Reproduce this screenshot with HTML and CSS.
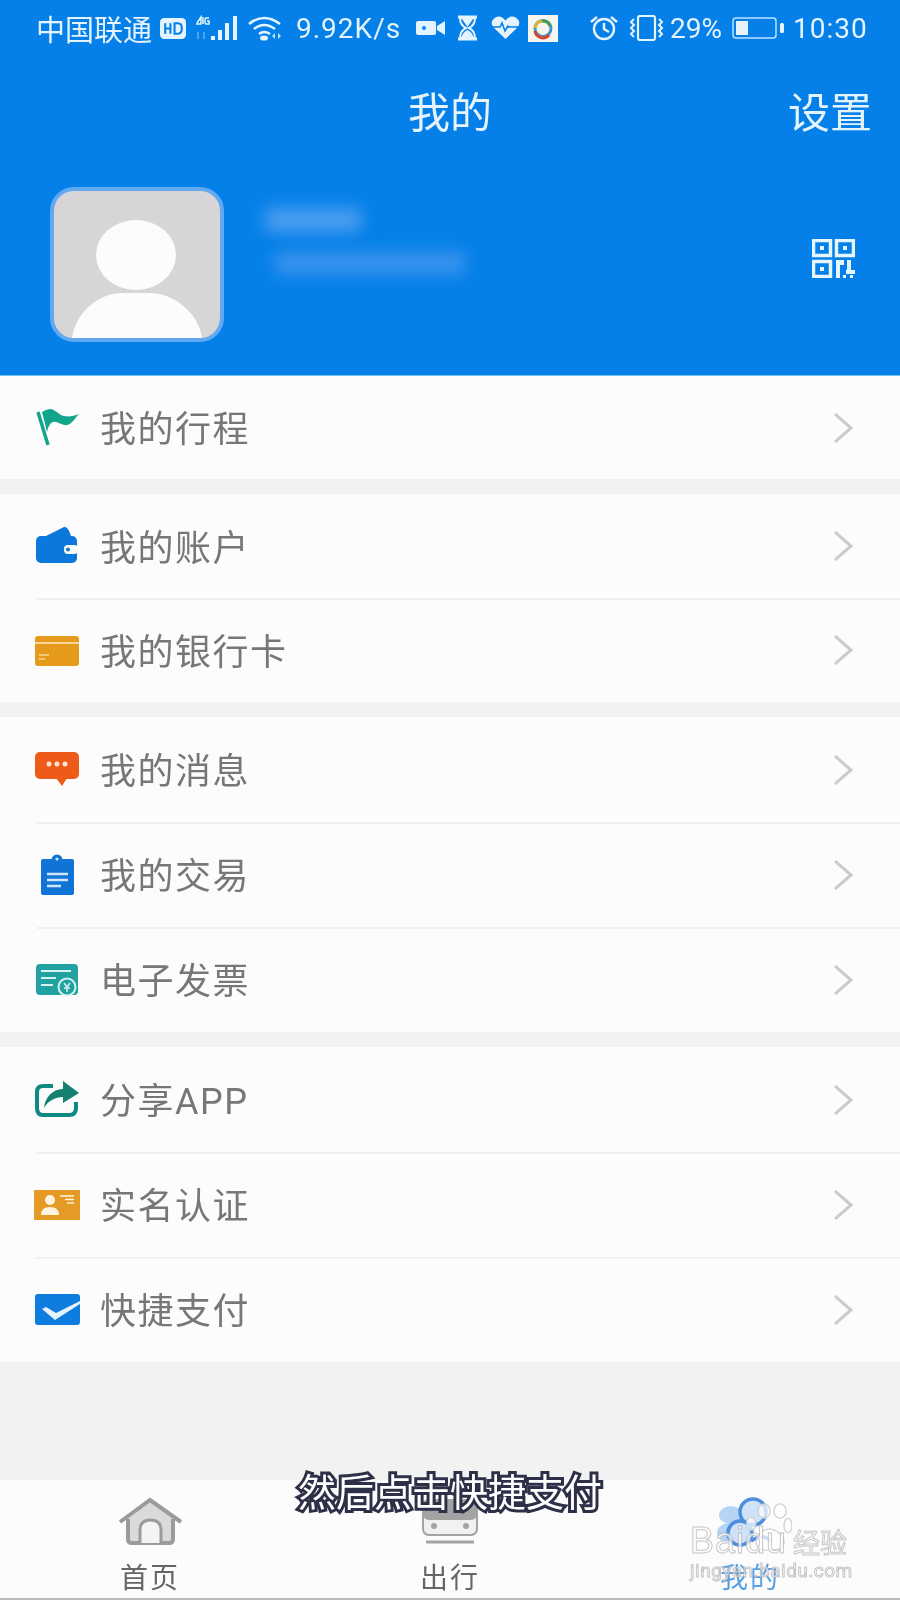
FILE: index.html
```html
<!DOCTYPE html>
<html lang="zh-CN">
<head>
<meta charset="UTF-8">
<title>我的</title>
<link rel="stylesheet" href="styles.css">
</head>
<body>

<div class="screen">

  <div class="header">
    <div class="status-bar">
      <span class="carrier">中国联通</span>
      <svg class="st-hd" width="26" height="21" viewBox="0 0 25 20"><rect width="25" height="20" rx="4" fill="#e4f3fd"/><path d="M5 5v10M5 10h5M10 5v10M14 5v10h3q4 0 4-5t-4-5z" fill="none" stroke="#0580e8" stroke-width="2"/></svg>
      <svg class="st-signal" width="44" height="26" viewBox="0 0 44 26"><path d="M1 8l4-6v7H0M7 2v7M13 3h-3q-1 0-1 3t1 3h3V6h-2" fill="none" stroke="#e4f3fd" stroke-width="1.5"/><path d="M2 17v7M8 17v7" stroke="#5fb0f2" stroke-width="1.5"/><rect x="15" y="21" width="4" height="4" fill="#e4f3fd"/><rect x="22" y="15" width="4" height="10" fill="#e4f3fd"/><rect x="29" y="8" width="4" height="17" fill="#e4f3fd"/><rect x="37" y="1" width="4" height="24" fill="#e4f3fd"/></svg>
      <svg class="st-wifi" width="34" height="26" viewBox="0 0 34 26"><path d="M1 9q15-12 31 0M6 14q10-8 21 0M11 19q5-4 11 0" fill="none" stroke="#e4f3fd" stroke-width="2.6"/><ellipse cx="16" cy="23" rx="4" ry="2.6" fill="#e4f3fd"/><path d="M24 21l3 3v-6zM33 21l-3 3v-6z" fill="#bfe0fa"/></svg>
      <span class="speed">9.92K/s</span>
      <svg class="st-cam" width="29" height="16" viewBox="0 0 29 16"><rect y="1" width="20" height="14" rx="2" fill="#e4f3fd"/><circle cx="8" cy="8" r="2" fill="#0580e8"/><path d="M21 6l8-5v14l-8-5z" fill="#e4f3fd"/></svg>
      <svg class="st-glass" width="21" height="26" viewBox="0 0 21 26"><path d="M1 2h19M1 24h19" stroke="#e4f3fd" stroke-width="3"/><path d="M3 3h15q0 7-6 10 6 3 6 10H3q0-7 6-10Q3 10 3 3z" fill="none" stroke="#e4f3fd" stroke-width="2"/><path d="M5 4h11l-5.500 8zM4 23q2-6 6.500-8 4.500 2 6.500 8z" fill="#e4f3fd"/></svg>
      <svg class="st-heart" width="29" height="24" viewBox="0 0 29 24"><path d="M14.500 23L2 11Q-1 6 3 2.500T12 2l2.500 2.500L17 2q5-3 9 .5t1 8.500z" fill="#e4f3fd"/><path d="M0 11h9l2-4 3 8 3-5 1 1h10" fill="none" stroke="#0580e8" stroke-width="1.600"/></svg>
      <svg class="st-app" width="30" height="27" viewBox="0 0 30 27"><rect width="30" height="27" fill="#f7f5ee"/><circle cx="15" cy="13.500" r="8" fill="none" stroke="#3a9ad0" stroke-width="3"/><path d="M7 13a8 8 0 0 1 7-7" fill="none" stroke="#e8b22c" stroke-width="3"/><path d="M7 16a8 8 0 0 0 14 4" fill="none" stroke="#d8452c" stroke-width="3"/><path d="M14 6a8 8 0 0 1 8 5" fill="none" stroke="#4a9f4a" stroke-width="3"/></svg>
      <svg class="st-alarm" width="28" height="26" viewBox="0 0 28 26"><circle cx="14" cy="14" r="10" fill="none" stroke="#e4f3fd" stroke-width="2.400"/><path d="M14 8v6l5 3M1 7l6-5M27 7l-6-5" fill="none" stroke="#e4f3fd" stroke-width="2.400"/></svg>
      <svg class="st-vibrate" width="37" height="26" viewBox="0 0 37 26"><rect x="10" y="1" width="17" height="24" rx="2" fill="none" stroke="#e4f3fd" stroke-width="2.200"/><path d="M6 4l-3 3 3 3-3 3 3 3-3 3 3 3M31 4l3 3-3 3 3 3-3 3 3 3-3 3" fill="none" stroke="#e4f3fd" stroke-width="2"/></svg>
      <span class="battery-pct">29%</span>
      <svg class="st-battery" width="53" height="22" viewBox="0 0 53 22"><rect x="1" y="1" width="43" height="20" rx="3" fill="none" stroke="#bfe0fa" stroke-width="1.500"/><rect x="4" y="4" width="12" height="14" fill="#e4f3fd"/><rect x="48" y="6" width="4" height="10" rx="1.500" fill="#e4f3fd"/></svg>
      <span class="clock">10:30</span>
    </div>

    <div class="title-bar">
      <span></span>
      <span class="page-title">我的</span>
      <span class="settings">设置</span>
    </div>

    <div class="profile">
      <div class="avatar">
        <svg width="166" height="147" viewBox="0 0 166 147"><ellipse cx="82" cy="64" rx="40" ry="35" fill="#fdfcfd"/><path d="M18 147C22 120 46 102 68 102H96C118 102 144 120 148 147Z" fill="#fdfcfd"/></svg>
      </div>
      <div class="user-info">
        <div class="user-name"></div>
        <div class="user-phone"></div>
      </div>
      <svg class="qr" width="43" height="39" viewBox="0 0 43 39"><g fill="none" stroke="#e6f6fd" stroke-width="3.500"><rect x="1.500" y="1.500" width="17" height="15"/><rect x="24.500" y="1.500" width="17" height="15"/><rect x="1.500" y="22.500" width="17" height="15"/></g><g fill="#e6f6fd"><rect x="8" y="7" width="4" height="4"/><rect x="31" y="7" width="4" height="4"/><rect x="8" y="28" width="4" height="4"/><path d="M24 21h8v5h-4v13h-4zM35 21h4v10h4v4h-9v-4h1z"/><rect x="31" y="36" width="3" height="3"/><rect x="38" y="36" width="3" height="3"/></g></svg>
    </div>
  </div>

  <div class="group group-one">
    <div class="row">
      <svg class="row-icon" viewBox="0 0 46 44"><path d="M8 6C11 4 14 3 17 3C22 4 25 9 30 10C35 11 40 10 45 8C41 12 38 18 33 19C28 20 24 15 19 16C16 17 14 21 13 26Z" fill="#13a58c"/><path d="M4 6l10 33" stroke="#13a58c" stroke-width="3.500"/></svg>
      <span class="row-label">我的行程</span>
      <svg class="chevron" width="20" height="30" viewBox="0 0 20 30"><path d="M2 1l16 14L2 29" fill="none" stroke="#cbcbcb" stroke-width="3"/></svg>
    </div>
  </div>

  <div class="group group-two">
    <div class="row">
      <svg class="row-icon" viewBox="0 0 46 44"><path d="M12 12L30 3Q34 2 37 12Z" fill="#0c78dc"/><rect x="2" y="12" width="41" height="27" rx="5" fill="#0c78dc"/><rect x="30" y="21" width="14" height="9" rx="4" fill="#fdfcfd"/><circle cx="34" cy="25.500" r="2" fill="#0c78dc"/></svg>
      <span class="row-label">我的账户</span>
      <svg class="chevron" width="20" height="30" viewBox="0 0 20 30"><path d="M2 1l16 14L2 29" fill="none" stroke="#cbcbcb" stroke-width="3"/></svg>
    </div>
    <div class="row">
      <svg class="row-icon" viewBox="0 0 46 44"><rect x="1" y="8" width="44" height="30" rx="3" fill="#e59a1c"/><rect x="1" y="14" width="44" height="2" fill="#f7d698"/><path d="M5 27h10M5 31h6" stroke="#f7d698" stroke-width="1.500"/></svg>
      <span class="row-label">我的银行卡</span>
      <svg class="chevron" width="20" height="30" viewBox="0 0 20 30"><path d="M2 1l16 14L2 29" fill="none" stroke="#cbcbcb" stroke-width="3"/></svg>
    </div>
  </div>

  <div class="group group-three">
    <div class="row">
      <svg class="row-icon" viewBox="0 0 46 44"><rect x="1" y="4" width="44" height="27" rx="5" fill="#ee5a17"/><path d="M22 30h11l-5 8z" fill="#ee5a17"/><g fill="#fde3cf"><circle cx="15" cy="16" r="2.500"/><circle cx="23" cy="16" r="2.500"/><circle cx="31" cy="16" r="2.500"/></g></svg>
      <span class="row-label">我的消息</span>
      <svg class="chevron" width="20" height="30" viewBox="0 0 20 30"><path d="M2 1l16 14L2 29" fill="none" stroke="#cbcbcb" stroke-width="3"/></svg>
    </div>
    <div class="row">
      <svg class="row-icon" viewBox="0 0 46 44"><circle cx="23" cy="7" r="5.500" fill="#0f74d5"/><rect x="7" y="6" width="33" height="36" rx="2" fill="#0f74d5"/><circle cx="23" cy="6" r="1.500" fill="#cfe6fa"/><path d="M13 21h21M13 27h21M13 33h14" stroke="#cfe6fa" stroke-width="2.400"/></svg>
      <span class="row-label">我的交易</span>
      <svg class="chevron" width="20" height="30" viewBox="0 0 20 30"><path d="M2 1l16 14L2 29" fill="none" stroke="#cbcbcb" stroke-width="3"/></svg>
    </div>
    <div class="row">
      <svg class="row-icon" viewBox="0 0 46 44"><rect x="2" y="6" width="42" height="31" rx="4" fill="#21a1a0"/><path d="M7 13h30M7 20h15M7 27h12" stroke="#d6f2f0" stroke-width="2"/><circle cx="33" cy="29" r="8.500" fill="#21a1a0" stroke="#d6f2f0" stroke-width="2"/><path d="M30 25l3 4 3-4M33 29v5M30 30h6" fill="none" stroke="#d6f2f0" stroke-width="1.500"/></svg>
      <span class="row-label">电子发票</span>
      <svg class="chevron" width="20" height="30" viewBox="0 0 20 30"><path d="M2 1l16 14L2 29" fill="none" stroke="#cbcbcb" stroke-width="3"/></svg>
    </div>
  </div>

  <div class="group group-three">
    <div class="row">
      <svg class="row-icon" viewBox="0 0 46 44"><path d="M19 8H9Q3 8 3 14V30Q3 37 9 37H35Q42 37 42 30V24" fill="none" stroke="#0f8a83" stroke-width="4"/><path d="M29 3L45 15L29 25V19C21 19 14 23 10 30C11 20 18 11 29 11Z" fill="#14806f"/></svg>
      <span class="row-label">分享APP</span>
      <svg class="chevron" width="20" height="30" viewBox="0 0 20 30"><path d="M2 1l16 14L2 29" fill="none" stroke="#cbcbcb" stroke-width="3"/></svg>
    </div>
    <div class="row">
      <svg class="row-icon" viewBox="0 0 46 44"><rect y="7" width="46" height="30" rx="1" fill="#e59a25"/><circle cx="16" cy="17" r="5" fill="#fdf3df"/><path d="M7 32Q7 24 16 24Q25 24 25 32Z" fill="#fdf3df"/><path d="M26 13h14M31 16.500h9M33 20h7" stroke="#fdf3df" stroke-width="1.400"/></svg>
      <span class="row-label">实名认证</span>
      <svg class="chevron" width="20" height="30" viewBox="0 0 20 30"><path d="M2 1l16 14L2 29" fill="none" stroke="#cbcbcb" stroke-width="3"/></svg>
    </div>
    <div class="row">
      <svg class="row-icon" viewBox="0 0 46 44"><rect x="1" y="6" width="45" height="31" rx="3" fill="#0f7de0"/><path d="M8 21L12 19L22 25L46 13V16L21 32Z" fill="#e4f3fd"/></svg>
      <span class="row-label">快捷支付</span>
      <svg class="chevron" width="20" height="30" viewBox="0 0 20 30"><path d="M2 1l16 14L2 29" fill="none" stroke="#cbcbcb" stroke-width="3"/></svg>
    </div>
  </div>

  <div class="spacer"></div>

  <div class="tab-bar">
    <div class="tab">
      <svg class="tab-icon" width="65" height="50" viewBox="0 0 65 50"><path d="M32 4L9 22V42Q9 47 14 47H51Q56 47 56 42V22Z" fill="#dadada"/><path d="M2 25L32 3L63 25" fill="none" stroke="#9b9b9b" stroke-width="4"/><path d="M10 22V42Q10 46 14 46H51Q55 46 55 42V22" fill="none" stroke="#9b9b9b" stroke-width="4"/><path d="M22 46V33Q22 23 32.500 23T43 33V46" fill="#f4f4f4" stroke="#9b9b9b" stroke-width="3"/></svg>
      <span class="tab-label">首页</span>
    </div>
    <div class="tab">
      <svg class="tab-icon" width="56" height="50" viewBox="0 0 56 50"><rect x="1" y="3" width="54" height="35" rx="6" fill="#f1f1f1" stroke="#a3a3a3" stroke-width="2"/><rect x="1" y="3" width="54" height="20" rx="6" fill="#a3a3a3"/><circle cx="12" cy="29" r="3" fill="#a3a3a3"/><circle cx="44" cy="29" r="3" fill="#a3a3a3"/><path d="M4 45h48" stroke="#a3a3a3" stroke-width="3"/></svg>
      <span class="tab-label">出行</span>
    </div>
    <div class="tab tab-active">
      <svg class="tab-icon" width="66" height="50" viewBox="0 0 66 50"><ellipse cx="14" cy="18" rx="12" ry="9" fill="#b6d5f5"/><ellipse cx="12" cy="36" rx="12" ry="10" fill="#b6d5f5"/><circle cx="36" cy="15" r="13" fill="#cfe2f8" stroke="#4d8fdc" stroke-width="3.500"/><circle cx="23" cy="36" r="12" fill="#cfe2f8" stroke="#4d8fdc" stroke-width="3.500"/><path d="M34 44q12-8 20 0" fill="none" stroke="#4d8fdc" stroke-width="3.500"/></svg>
      <span class="tab-label">我的</span>
    </div>
  </div>

  <div class="subtitle">然后点击快捷支付</div>

  <div class="watermark">
    <svg class="paw" width="46" height="50" viewBox="0 0 46 62" preserveAspectRatio="none"><g fill="#ffffff" fill-opacity=".7" stroke="#c9c9c9" stroke-opacity=".8" stroke-width="1.500"><ellipse cx="5" cy="26" rx="5" ry="8"/><ellipse cx="18" cy="10" rx="6" ry="9"/><ellipse cx="34" cy="10" rx="6" ry="9"/><ellipse cx="42" cy="28" rx="4" ry="9"/><path d="M10 50Q10 34 24 32Q38 36 38 50Q36 60 24 58Q12 60 10 50Z"/></g></svg>
    <div class="wm-top"><span class="wm-brand">Baidu</span><span class="wm-cn">经验</span></div>
    <div class="wm-url">jingyan.baidu.com</div>
  </div>

</div>

</body>
</html>
```

FILE: styles.css
```css
* {
  box-sizing: border-box;
}

body {
  margin: 0;
  background: #f2f2f2;
  font-family: Roboto, "Noto Sans CJK SC", sans-serif;
}

.screen {
  position: relative;
  width: 900px;
  height: 1600px;
  display: flex;
  flex-direction: column;
  overflow: hidden;
  background: #f2f2f2;
  filter: blur(0.5px);
}

.header {
  height: 376px;
  background: #0580e8;
  border-bottom: 1px solid #6fc0f5;
  color: #e4f3fd;
}

.status-bar {
  height: 56px;
  padding-left: 36px;
  display: flex;
  align-items: center;
  font-size: 28px;
  white-space: nowrap;
}

.carrier { width: 114px; font-size: 29px; }
.st-hd { margin-left: 10px; }
.st-signal { margin-left: 10px; }
.st-wifi { margin-left: 8px; }
.speed { margin-left: 14px; width: 104px; letter-spacing: 1px; }
.st-cam { margin-left: 16px; }
.st-glass { margin-left: 12px; }
.st-heart { margin-left: 13px; }
.st-app { margin-left: 8px; }
.st-alarm { margin-left: 32px; }
.st-vibrate { margin-left: 10px; }
.battery-pct { margin-left: 5px; width: 53px; }
.st-battery { margin-left: 9px; }
.clock { margin-left: 8px; letter-spacing: 1px; }

.title-bar {
  height: 106px;
  padding: 0 28px;
  display: grid;
  grid-template-columns: 1fr auto 1fr;
  align-items: center;
  font-size: 42px;
}

.settings {
  justify-self: end;
}

.profile {
  margin-top: 25px;
  padding: 0 45px 0 50px;
  display: flex;
  align-items: center;
}

.avatar {
  width: 174px;
  height: 155px;
  border: 4px solid #62aaf0;
  border-radius: 24px;
  background: #d8d5d8;
  overflow: hidden;
}

.avatar svg {
  display: block;
}

.user-info {
  flex: 1;
  padding-left: 41px;
  padding-bottom: 48px;
}

.user-name {
  width: 96px;
  height: 24px;
  background: #4d9df0;
  filter: blur(8px);
}

.user-phone {
  width: 190px;
  height: 22px;
  margin: 20px 0 0 10px;
  background: #3b93ee;
  filter: blur(8px);
}

.qr {
  margin-bottom: 13px;
}

.group {
  display: flex;
  flex-direction: column;
  margin-bottom: 15px;
  background: #fdfcfd;
}

.group-one { height: 103px; }
.group-two { height: 208px; }
.group-three { height: 315px; }

.row {
  position: relative;
  flex: 1;
  padding: 0 47px 0 34px;
  display: flex;
  align-items: center;
}

.row + .row::before {
  content: "";
  position: absolute;
  top: 0;
  left: 37px;
  right: 0;
  height: 2px;
  background: #f1f0f1;
}

.row-icon {
  width: 46px;
  height: 44px;
}

.row-label {
  flex: 1;
  margin-left: 20px;
  padding-bottom: 3px;
  font-size: 36px;
  letter-spacing: 1.500px;
  color: #777777;
}

.spacer {
  flex: 1;
}

.tab-bar {
  height: 120px;
  margin-top: -15px;
  padding-bottom: 1px;
  display: grid;
  grid-template-columns: 1fr 1fr 1fr;
  background: #fdfcfd;
  border-bottom: 2px solid #b9b9b9;
}

.tab {
  padding-top: 17px;
  display: flex;
  flex-direction: column;
  align-items: center;
}

.tab-label {
  margin-top: 12px;
  font-size: 28px;
  letter-spacing: 2px;
  line-height: 40px;
  color: #666666;
}

.tab-active .tab-label {
  color: #5b9fe4;
}

.subtitle {
  position: absolute;
  left: 298px;
  top: 1465px;
  font-size: 38px;
  line-height: 56px;
  white-space: nowrap;
  color: #ffffff;
  -webkit-text-stroke: 6px #2d3047;
  paint-order: stroke fill;
}

.watermark {
  position: absolute;
  left: 690px;
  top: 1524px;
  width: 170px;
  color: rgba(255, 255, 255, 0.7);
  -webkit-text-stroke: 1px rgba(175, 175, 175, 0.7);
}

.paw {
  position: absolute;
  left: 56px;
  top: -21px;
}

.wm-top {
  position: relative;
  display: flex;
  align-items: center;
  height: 34px;
}

.wm-brand {
  font-size: 36px;
  font-family: "Liberation Sans", sans-serif;
  letter-spacing: 1px;
}

.wm-cn {
  margin-left: 6px;
  font-size: 27px;
}

.wm-url {
  position: relative;
  margin-top: 1px;
  font-size: 19px;
  letter-spacing: 0.500px;
  white-space: nowrap;
}
```
